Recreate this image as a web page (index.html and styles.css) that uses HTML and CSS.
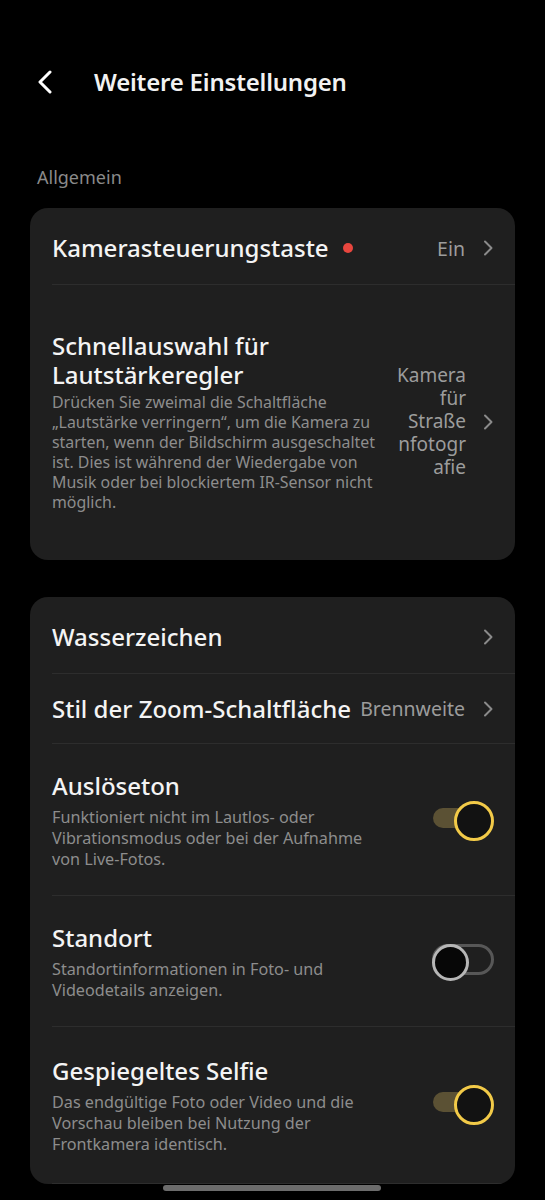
FILE: index.html
```html
<!DOCTYPE html>
<html lang="de">
<head>
  <meta charset="UTF-8" />
  <meta name="viewport" content="width=device-width, initial-scale=1.0"/>
  <title>Weitere Einstellungen</title>
  <link rel="stylesheet" href="styles.css">
</head>
<body>
  <header class="top-bar">
    <svg class="back" width="16" height="24" viewBox="0 0 16 24">
      <path d="M13 2 L3 12 L13 22" fill="none" stroke="#fff" stroke-width="3" stroke-linecap="round" stroke-linejoin="round"/>
    </svg>
    <h1>Weitere Einstellungen</h1>
  </header>

  <p class="section-label">Allgemein</p>

  <div class="card">
    <div class="row nav short">
      <div class="row-text">
        <span class="row-title">Kamerasteuerungstaste<span class="dot"></span></span>
      </div>
      <span class="row-value">Ein</span>
      <svg class="chevron" width="12" height="16" viewBox="0 0 12 16"><path d="M3 1.5 L9.5 8 L3 14.5"/></svg>
    </div>
    <div class="row nav tall">
      <div class="row-text">
        <span class="row-title">Schnellauswahl für Lautstärkeregler</span>
        <span class="row-desc">Drücken Sie zweimal die Schaltfläche „Lautstärke verringern“, um die Kamera zu starten, wenn der Bildschirm ausgeschaltet ist. Dies ist während der Wiedergabe von Musik oder bei blockiertem IR-Sensor nicht möglich.</span>
      </div>
      <span class="row-value stacked">
        <span>Kamera</span>
        <span>für</span>
        <span>Straße</span>
        <span>nfotogr</span>
        <span>afie</span>
      </span>
      <svg class="chevron" width="12" height="16" viewBox="0 0 12 16"><path d="M3 1.5 L9.5 8 L3 14.5"/></svg>
    </div>
  </div>

  <div class="card">
    <div class="row nav short">
      <div class="row-text"><span class="row-title">Wasserzeichen</span></div>
      <svg class="chevron" width="12" height="16" viewBox="0 0 12 16"><path d="M3 1.5 L9.5 8 L3 14.5"/></svg>
    </div>
    <div class="row nav mid">
      <div class="row-text"><span class="row-title">Stil der Zoom-Schaltfläche</span></div>
      <span class="row-value">Brennweite</span>
      <svg class="chevron" width="12" height="16" viewBox="0 0 12 16"><path d="M3 1.5 L9.5 8 L3 14.5"/></svg>
    </div>
    <div class="row toggle-row">
      <div class="row-text">
        <span class="row-title">Auslöseton</span>
        <span class="row-desc">Funktioniert nicht im Lautlos- oder Vibrationsmodus oder bei der Aufnahme von Live-Fotos.</span>
      </div>
      <span class="switch on"></span>
    </div>
    <div class="row toggle-row">
      <div class="row-text">
        <span class="row-title">Standort</span>
        <span class="row-desc">Standortinformationen in Foto- und Videodetails anzeigen.</span>
      </div>
      <span class="switch off"></span>
    </div>
    <div class="row toggle-row last">
      <div class="row-text">
        <span class="row-title">Gespiegeltes Selfie</span>
        <span class="row-desc">Das endgültige Foto oder Video und die Vorschau bleiben bei Nutzung der Frontkamera identisch.</span>
      </div>
      <span class="switch on"></span>
    </div>
  </div>

  <div class="home-bar"></div>
</body>
</html>
```

FILE: styles.css
```css
/* Base */
* {
  box-sizing: border-box;
  margin: 0;
  padding: 0;
}

body {
  background: #000;
  color: #f2f2f2;
  font-family: 'Noto Sans', 'Open Sans', sans-serif;
  width: 545px;
  min-height: 1200px;
  overflow: hidden;
}

/* Header */
.top-bar {
  display: flex;
  align-items: center;
  height: 164px;
  padding-left: 37px;
}

.top-bar .back {
  flex: none;
  margin-right: 41px;
}

.top-bar h1 {
  font-size: 24px;
  font-weight: 600;
  line-height: 32px;
  letter-spacing: -0.2px;
}

.section-label {
  padding-left: 37px;
  font-size: 18px;
  line-height: 26px;
  color: #8a8a8a;
  margin-bottom: 18px;
}

/* Cards */
.card {
  margin: 0 30px 37px;
  background: #1f1f1f;
  border-radius: 18px;
  overflow: hidden;
}

.row {
  display: flex;
  align-items: center;
  margin-left: 22px;
  padding-right: 21px;
}

.row + .row {
  border-top: 1px solid #2d2d2d;
}

.row.short {
  height: 76px;
  padding-top: 4px;
}

.row.mid {
  height: 70px;
}

.row.tall {
  padding-top: 44px;
  padding-bottom: 46px;
  min-height: 276px;
}

.row-text {
  flex: 1;
  display: flex;
  flex-direction: column;
  min-width: 0;
}

.row-title {
  display: flex;
  align-items: center;
  font-size: 24px;
  font-weight: 500;
  line-height: 30px;
  color: #f4f4f4;
}

.row.tall .row-title {
  display: block;
  line-height: 29px;
  padding-right: 30px;
}

.row-desc {
  margin-top: 6px;
  font-size: 16.2px;
  line-height: 21px;
  color: #8d8d8d;
}

.row.tall .row-desc {
  margin-top: 3px;
  font-size: 15.9px;
  line-height: 20px;
}

.dot {
  width: 10px;
  height: 10px;
  border-radius: 50%;
  background: #e8463e;
  margin-left: 14px;
}

.row-value {
  flex: none;
  font-size: 19.5px;
  color: #9c9c9c;
  margin-left: 6px;
}

.row-value.stacked {
  display: flex;
  flex-direction: column;
  align-items: flex-end;
  width: 78px;
  margin-left: 0;
  font-size: 19px;
}

.row-value.stacked span {
  display: block;
  height: 23px;
  line-height: 23px;
}

.chevron {
  flex: none;
  margin-left: 17px;
}

.row.tall .chevron {
  margin-left: 16px;
}

.chevron path {
  fill: none;
  stroke: #8a8a8a;
  stroke-width: 2;
  stroke-linecap: round;
  stroke-linejoin: round;
}

/* Toggle rows */
.toggle-row {
  padding-top: 27px;
  padding-bottom: 25px;
}

.toggle-row .row-text {
  padding-right: 50px;
}

.toggle-row.last {
  padding-bottom: 28px;
  border-bottom: 1px solid #2d2d2d;
}

.toggle-row.last .row-title {
  margin-top: 2px;
}

.switch {
  flex: none;
  position: relative;
  width: 61px;
  height: 34px;
  margin-bottom: 5px;
}

.switch::before,
.switch::after {
  content: "";
  position: absolute;
  border-radius: 999px;
}

.switch.on::before {
  left: 0;
  top: 7px;
  width: 40px;
  height: 20px;
  background: #5b5134;
}

.switch.on::after {
  right: 0;
  top: 0;
  width: 34px;
  height: 34px;
  border: 3px solid #f2ca48;
  background: #121212;
}

.switch.off {
  width: 62px;
  height: 31px;
}

.switch.off::before {
  inset: 0;
  border: 3px solid #575757;
}

.switch.off::after {
  left: 0;
  top: 0;
  width: 31px;
  height: 31px;
  border: 3px solid #b6b6b6;
  background: #070707;
}

/* Gesture bar over content */
.home-bar {
  position: fixed;
  left: 163px;
  top: 1185px;
  width: 218px;
  height: 6px;
  border-radius: 3px;
  background: #6c6c6c;
}
```
